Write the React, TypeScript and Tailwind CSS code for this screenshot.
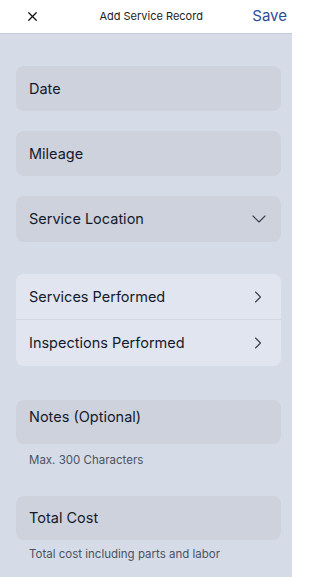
import { X, ChevronDown, ChevronRight } from "lucide-react"

const font = { fontFamily: "Inter, 'Noto Sans', sans-serif" }

function Field({ label, children }: { label: string; children?: React.ReactNode }) {
  return (
    <div className="flex h-[45px] items-center justify-between rounded-lg bg-[#cdd2dd] pl-[13px] pr-[10px]">
      <span className="text-[14.5px] text-[#141a2b]">{label}</span>
      {children}
    </div>
  )
}

export default function App() {
  return (
    <div className="h-[577px] w-[292px] overflow-hidden bg-[#d6dce7]" style={font}>
      <header className="flex h-[34px] items-center justify-between border-b border-[#c5ccd7] bg-white pl-[25px] pr-[5px]">
        <X size={15} strokeWidth={2} className="text-[#111]" />
        <span className="ml-[10px] text-[11px] text-[#222]">Add Service Record</span>
        <span className="text-[15px] text-[#2f4b9b]">Save</span>
      </header>

      <main className="pl-4 pr-[11px] pt-[32px]">
        <div className="flex flex-col gap-[20px]">
          <Field label="Date" />
          <Field label="Mileage" />
          <div className="h-[46px]">
            <div className="flex h-full items-center justify-between rounded-lg bg-[#cdd2dd] pl-[13px] pr-[10px]">
              <span className="text-[14.5px] text-[#141a2b]">Service Location</span>
              <ChevronDown size={24} strokeWidth={1.1} className="text-[#363d4e]" />
            </div>
          </div>
        </div>

        <div className="mt-[32px] overflow-hidden rounded-lg bg-[#e1e5ef]">
          <div className="flex h-[46px] items-center justify-between border-b border-[#d3d8e2] pl-[13px] pr-[13px]">
            <span className="text-[14.5px] text-[#141a2b]">Services Performed</span>
            <ChevronRight size={20} strokeWidth={1.3} className="text-[#363d4e]" />
          </div>
          <div className="flex h-[46px] items-center justify-between pl-[13px] pr-[13px]">
            <span className="text-[14.5px] text-[#141a2b]">Inspections Performed</span>
            <ChevronRight size={20} strokeWidth={1.3} className="text-[#363d4e]" />
          </div>
        </div>

        <div className="mt-[34px] h-[44px] rounded-lg bg-[#cdd2dd] pl-[13px] pt-[4px]">
          <span className="text-[14.5px] text-[#141a2b]">Notes (Optional)</span>
        </div>
        <p className="mt-[8px] pl-[13px] text-[11.5px] text-[#4a5263]">Max. 300 Characters</p>

        <div className="mt-[27px] flex h-[44px] items-center rounded-lg bg-[#cdd2dd] pl-[13px]">
          <span className="text-[14.5px] text-[#141a2b]">Total Cost</span>
        </div>
        <p className="mt-[6px] pl-[13px] text-[11.5px] text-[#4a5263]">Total cost including parts and labor</p>
      </main>
    </div>
  )
}
